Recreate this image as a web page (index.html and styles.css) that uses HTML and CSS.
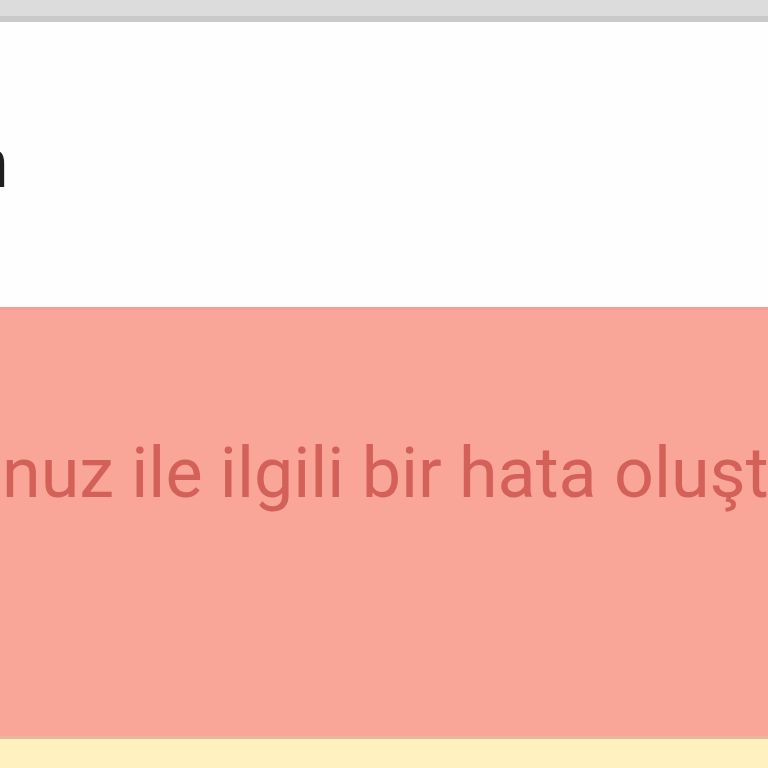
FILE: index.html
```html
<!DOCTYPE html>
<html lang="tr">
<head>
<meta charset="utf-8">
<title>Hata</title>
<link rel="stylesheet" href="styles.css">
</head>
<body>
<div class="topbar"></div>
<div class="header">
  <div class="title-row">
    <span class="pre"><span class="title">Giriş yapın</span></span>
  </div>
</div>
<div class="alert">
  <div class="alert-row">
    <span class="pre"><span class="msg">Başvuru</span></span><span class="msg">nuz ile ilgili bir hata oluştu.</span>
  </div>
</div>
<div class="notice"></div>
</body>
</html>
```

FILE: styles.css
```css
html, body {
  margin: 0;
  padding: 0;
  width: 768px;
  height: 768px;
  overflow: hidden;
  background: #fefefe;
  font-family: Roboto, "Liberation Sans", sans-serif;
}

.topbar {
  height: 16px;
  background: #dcdcdc;
  border-bottom: 6px solid #c9c9c9;
}

.header {
  height: 285px;
  background: #fefefe;
  display: flex;
  align-items: center;
}

.title-row {
  display: flex;
  height: 80px;
  align-items: center;
  padding-left: 9px;
  margin-top: -4px;
}

.pre {
  width: 0;
  display: flex;
  justify-content: flex-end;
  white-space: nowrap;
}

.title {
  font-size: 70px;
  color: #1f1f1f;
  line-height: 1;
}

.alert {
  height: 426px;
  background: #f9a597;
  border-top: 3px solid #fb9c94;
  display: flex;
  align-items: center;
}

.alert-row {
  display: flex;
  white-space: nowrap;
  margin-top: -100px;
  padding-left: 2px;
}

.msg {
  font-size: 70px;
  line-height: 1;
  color: #d4605a;
}

.notice {
  height: 40px;
  background: #fff2c0;
  border-top: 3px solid #e8b89a;
}
```
